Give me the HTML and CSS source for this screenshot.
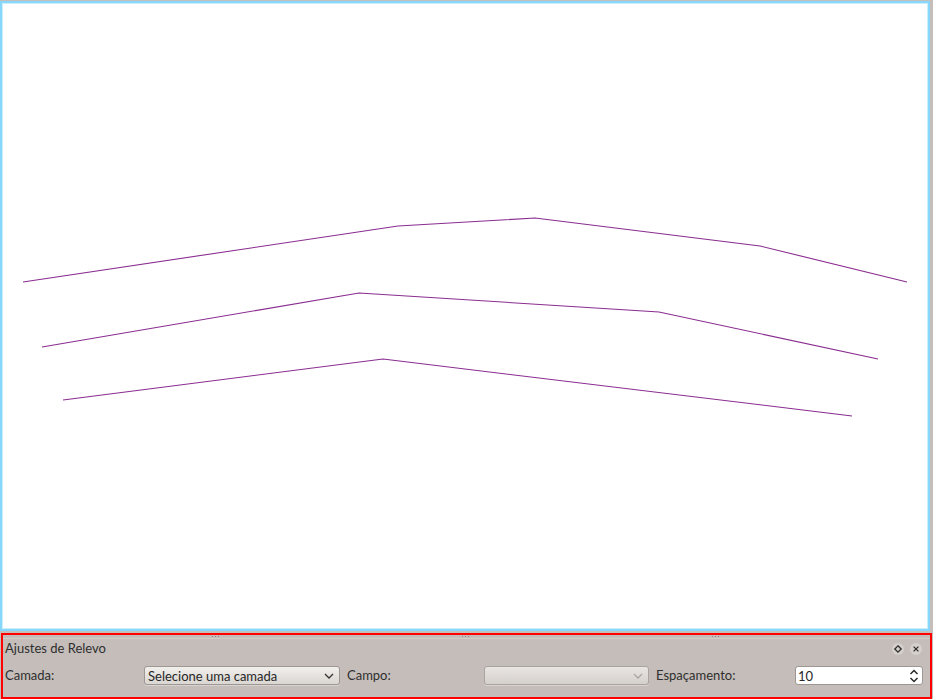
FILE: index.html
```html
<!DOCTYPE html>
<html lang="pt">
<head>
<meta charset="utf-8">
<title>Ajustes de Relevo</title>
<link rel="stylesheet" href="styles.css">
</head>
<body>
<div class="canvas">
  <svg class="plot" viewBox="2 3 926 626" preserveAspectRatio="none">
    <polyline points="23,282 398,226 535,218 760,246 907,282" />
    <polyline points="42,347 359,293 659,312 878,359" />
    <polyline points="63,400 383,359 852,416" />
  </svg>
</div>
<div class="dock">
  <div class="handle">
    <span class="dots"></span><span class="dots"></span><span class="dots"></span>
  </div>
  <div class="titlebar">
    <span class="title">Ajustes de Relevo</span>
    <div class="tbuttons">
      <span class="tbtn"><svg viewBox="0 0 10 10"><path d="M5 1.8 L8.2 5 L5 8.2 L1.8 5 Z" /></svg></span>
      <span class="tbtn"><svg viewBox="0 0 10 10"><path d="M2.6 2.6 L7.4 7.4 M7.4 2.6 L2.6 7.4" /></svg></span>
    </div>
  </div>
  <div class="controls">
    <span class="label">Camada:</span>
    <div class="combo"><span class="ctext">Selecione uma camada</span><svg class="chev" viewBox="0 0 10 6"><path d="M1 1 L5 5 L9 1" /></svg></div>
    <span class="label gap">Campo:</span>
    <div class="combo disabled"><span class="ctext"></span><svg class="chev" viewBox="0 0 10 6"><path d="M1 1 L5 5 L9 1" /></svg></div>
    <span class="label gap">Espaçamento:</span>
    <div class="spin"><span class="ctext">10</span><svg class="updown" viewBox="0 0 10 14"><path d="M1.5 5 L5 1.5 L8.5 5 M1.5 9 L5 12.5 L8.5 9" /></svg></div>
  </div>
</div>
</body>
</html>
```

FILE: styles.css
```css
html, body {
  margin: 0;
  padding: 0;
}
body {
  width: 933px;
  height: 699px;
  overflow: hidden;
  background: #c4bdb9;
  display: flex;
  flex-direction: column;
  font-family: Lato, "Noto Sans", "DejaVu Sans", sans-serif;
  font-size: 13px;
  color: #2f2f2f;
}
.canvas {
  margin: 1px 3px 0 0;
  height: 630px;
  box-sizing: border-box;
  border: 2px solid #86d7fb;
  box-shadow: inset 0 0 0 1px #cbeefd;
  background: #ffffff;
  flex: none;
}
.plot {
  display: block;
  width: 926px;
  height: 626px;
}
.plot polyline {
  fill: none;
  stroke: #8a2c90;
  stroke-width: 1.1;
}
.dock {
  margin: 2px 1px 0 1px;
  height: 66px;
  box-sizing: border-box;
  border: 2px solid #ff0000;
  flex: none;
  display: flex;
  flex-direction: column;
}
.handle {
  height: 3px;
  border-bottom: 1px solid #d3ccc9;
  display: flex;
  align-items: center;
  gap: 243px;
  padding-left: 209px;
}
.dots {
  width: 7px;
  height: 1px;
  background: repeating-linear-gradient(90deg, #8d8683 0 1px, transparent 1px 3px);
}
.titlebar {
  height: 19px;
  display: flex;
  align-items: center;
  padding: 0 8px 0 2px;
}
.title {
  flex: 1;
  line-height: 19px;
}
.tbuttons {
  display: flex;
  gap: 6px;
}
.tbtn {
  width: 12px;
  height: 12px;
  border-radius: 50%;
  background: #d6d0cd;
  display: flex;
  align-items: center;
  justify-content: center;
}
.tbtn svg {
  width: 10px;
  height: 10px;
}
.tbtn path {
  fill: none;
  stroke: #2f2f2f;
  stroke-width: 1.3;
}
.controls {
  display: grid;
  grid-template-columns: 139px 196px 144px 165px 146px 128px;
  align-items: center;
  padding: 8px 0 0 2px;
}
.label {
  line-height: 19px;
  white-space: nowrap;
}
.label.gap {
  padding-left: 7px;
}
.combo, .spin {
  height: 19px;
  box-sizing: border-box;
  border: 1px solid #9d9692;
  border-radius: 3px;
  display: flex;
  align-items: center;
  padding: 0 5px 0 3px;
}
.combo {
  background: linear-gradient(#f1efec, #dad6d2);
  box-shadow: 0 1px 0 rgba(255, 255, 255, 0.35);
}
.combo.disabled {
  background: linear-gradient(#e8e5e2, #d5d0cc);
  border-color: #aaa39f;
}
.ctext {
  flex: 1;
  white-space: nowrap;
  color: #262626;
}
.chev {
  width: 10px;
  height: 6px;
}
.chev path {
  fill: none;
  stroke: #333333;
  stroke-width: 1.3;
}
.disabled .chev path {
  stroke: #aaa5a1;
}
.spin {
  background: #ffffff;
  padding-right: 3px;
  padding-left: 2px;
}
.updown {
  width: 10px;
  height: 14px;
}
.updown path {
  fill: none;
  stroke: #2a2a2a;
  stroke-width: 1.5;
}
```
